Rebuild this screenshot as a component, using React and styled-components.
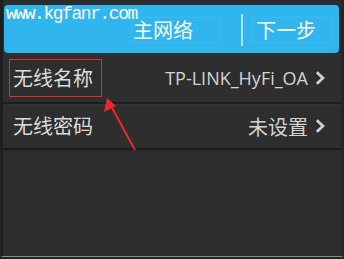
import React from "react";
import styled, { createGlobalStyle } from "styled-components";

const Global = createGlobalStyle`
  html, body { margin: 0; padding: 0; background: #232323; }
  body { font-family: "Noto Sans", "Noto Sans CJK SC", sans-serif; }
`;

const Screen = styled.div`
  position: relative;
  width: 344px;
  height: 257px;
  box-sizing: border-box;
  background: #2c2c2c;
  border-left: 3px solid #1f1f1f;
  border-right: 3px solid #262626;
  border-bottom: 1px solid #8a8a8a;
  padding-top: 5px;
  display: flex;
  flex-direction: column;
  overflow: hidden;
`;

const Header = styled.div`
  position: relative;
  margin: 0 2px 0 1px;
  height: 48px;
  border-radius: 4px;
  background: #30b5ef;
  display: flex;
  align-items: center;
  padding-left: 127px;
  box-sizing: border-box;
`;

const Watermark = styled.span`
  position: absolute;
  left: 2px;
  top: -1px;
  font-family: "Liberation Mono", "DejaVu Sans Mono", monospace;
  font-size: 18px;
  letter-spacing: -1.45px;
  color: #ffffff;
`;

const HeadBox = styled.div`
  width: ${(p) => p.$w}px;
  height: 26px;
  box-sizing: border-box;
  border: 1px solid rgba(255, 255, 255, 0.07);
  display: flex;
  align-items: center;
  padding-left: ${(p) => p.$pad}px;
  font-family: "Noto Sans CJK SC", sans-serif;
  font-size: 20px;
  color: #ffffff;
  margin-top: 1px;
`;

const Separator = styled.div`
  width: 2px;
  height: 32px;
  margin: 2px 9px 0 20px;
  background: rgba(230, 245, 255, 0.7);
`;

const List = styled.div`
  display: flex;
  flex-direction: column;
  margin-top: 1px;
`;

const Row = styled.div`
  height: ${(p) => p.$h}px;
  display: flex;
  align-items: center;
  padding: 0 16px 0 6px;
  background: #2e2e2e;
  border-bottom: 2px solid #1c1c1c;
  box-shadow: inset 0 1px 0 #353535;
`;

const Label = styled.div`
  font-family: "Noto Sans CJK SC", sans-serif;
  font-size: 20px;
  color: #dcdcdc;
  padding: 4px 8px 4px 3px;
  border: 1.5px solid ${(p) => (p.$mark ? "#e8282a" : "transparent")};
  line-height: 28px;
`;

const Value = styled.div`
  margin-left: auto;
  font-family: ${(p) =>
    p.$latin ? '"Open Sans", "Noto Sans", sans-serif' : '"Noto Sans CJK SC", sans-serif'};
  font-size: ${(p) => (p.$latin ? 18 : 20)}px;
  color: #d4d4d4;
`;

const Chevron = styled.svg`
  width: 10px;
  height: 14px;
  margin-left: 7px;
  flex: none;
`;

const Arrow = styled.svg`
  position: absolute;
  left: -3px;
  top: 0;
  pointer-events: none;
`;

const Chev = () => (
  <Chevron viewBox="0 0 10 14">
    <path d="M1.8 1.2 L8 7 L1.8 12.8" fill="none" stroke="#d0d0d0" strokeWidth="2.8" />
  </Chevron>
);

export default function App() {
  return (
    <>
      <Global />
      <Screen>
        <Header>
          <Watermark>www.kgfanr.com</Watermark>
          <HeadBox $w={90} $pad={1}>主网络</HeadBox>
          <Separator />
          <HeadBox $w={81} $pad={3}>下一步</HeadBox>
        </Header>
        <List>
          <Row $h={48}>
            <Label $mark>无线名称</Label>
            <Value $latin>TP-LINK_HyFi_OA</Value>
            <Chev />
          </Row>
          <Row $h={44}>
            <Label>无线密码</Label>
            <Value>未设置</Value>
            <Chev />
          </Row>
        </List>
        <Arrow width="344" height="259" viewBox="0 0 344 259">
          <line x1="135" y1="150" x2="111" y2="106" stroke="#e8282a" strokeWidth="2" />
          <polygon points="107,98 104,112 116,106" fill="#e8282a" />
        </Arrow>
      </Screen>
    </>
  );
}
